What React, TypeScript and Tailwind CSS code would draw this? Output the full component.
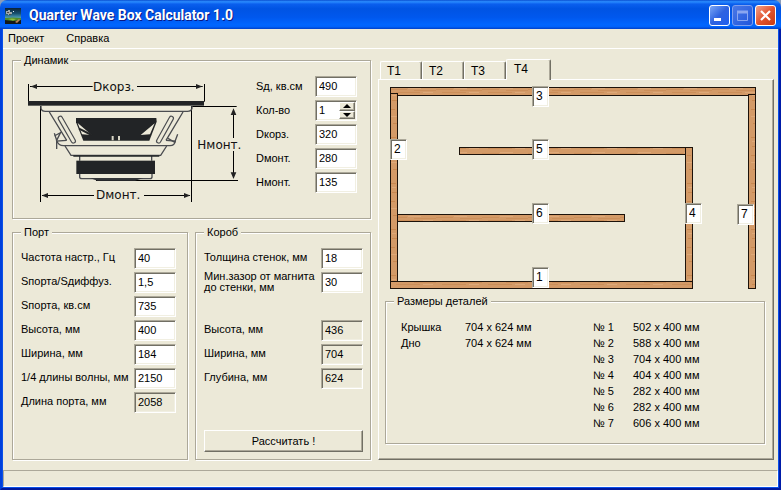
import React, { useState } from 'react';
import { clsx } from 'clsx';

const sunken =
  'border border-t-[#aca899] border-l-[#aca899] border-r-white border-b-white shadow-[inset_1px_1px_0_#716f64,inset_-1px_-1px_0_#f1efe2]';
const raised =
  'border border-t-white border-l-white border-r-[#716f64] border-b-[#716f64] shadow-[inset_-1px_-1px_0_#aca899] bg-[#ece9d8]';

const boards = [
  { x: 0, y: 0, w: 366, h: 9 },
  { x: 358, y: 7, w: 8, h: 195 },
  { x: 0, y: 6, w: 8, h: 190 },
  { x: 69, y: 60, w: 227, h: 8 },
  { x: 295, y: 60, w: 8, h: 142 },
  { x: 7, y: 127, w: 228, h: 8 },
  { x: 0, y: 194, w: 303, h: 8 },
];

const boardMarks = [
  { n: 3, className: 'left-[142px] -top-px' },
  { n: 2, className: 'left-0 top-[52px]' },
  { n: 5, className: 'left-[142px] top-[52px]' },
  { n: 6, className: 'left-[142px] top-[116px]' },
  { n: 1, className: 'left-[142px] top-[180px]' },
  { n: 4, className: 'left-[295px] top-[116px]' },
  { n: 7, className: 'left-[347px] top-[117px]' },
];

const covers = [
  ['Крышка', '704 x 624 мм'],
  ['Дно', '704 x 624 мм'],
];

const parts = [
  ['№ 1', '502 x 400 мм'],
  ['№ 2', '588 x 400 мм'],
  ['№ 3', '704 x 400 мм'],
  ['№ 4', '404 x 400 мм'],
  ['№ 5', '282 x 400 мм'],
  ['№ 6', '282 x 400 мм'],
  ['№ 7', '606 x 400 мм'],
];

function Group({ title, className, children }: { title: string; className?: string; children: React.ReactNode }) {
  return (
    <fieldset
      className={clsx(
        'min-w-0 border border-[#aca899] pl-2 shadow-[1px_1px_0_#fff,inset_1px_1px_0_#fff]',
        className
      )}
    >
      <legend className="h-[13px] bg-[#ece9d8] px-[3px] leading-[13px]">{title}</legend>
      {children}
    </fieldset>
  );
}

function Field({ id, label, value, readOnly }: { id: string; label: React.ReactNode; value: string; readOnly?: boolean }) {
  return (
    <div className="flex h-[21px] items-center justify-between">
      <label htmlFor={id} className="whitespace-nowrap leading-[11px]">{label}</label>
      <input
        id={id}
        type="text"
        defaultValue={value}
        readOnly={readOnly}
        className={clsx('h-[21px] w-[42px] shrink-0 px-[3px] pb-px outline-none', sunken, readOnly ? 'bg-[#ece9d8]' : 'bg-white')}
      />
    </div>
  );
}

function CountField() {
  const [count, setCount] = useState(1);

  return (
    <div className="flex h-[21px] items-center justify-between">
      <label htmlFor="count">Кол-во</label>
      <div className={clsx('flex h-[21px] w-[42px] bg-white p-px', sunken)}>
        <input
          id="count"
          type="text"
          value={count}
          onChange={(e) => setCount(Number(e.target.value) || 1)}
          className="w-0 flex-1 bg-transparent pl-[2px] outline-none"
        />
        <div className="flex w-4 flex-col">
          <button
            type="button"
            aria-label="Больше"
            onClick={() => setCount(count + 1)}
            className={clsx('flex flex-1 items-center justify-center', raised)}
          >
            <svg width="8" height="4" viewBox="0 0 8 4"><path d="M4 0L8 4H0Z" /></svg>
          </button>
          <button
            type="button"
            aria-label="Меньше"
            onClick={() => setCount(Math.max(1, count - 1))}
            className={clsx('flex flex-1 items-center justify-center', raised)}
          >
            <svg width="8" height="4" viewBox="0 0 8 4"><path d="M4 4L8 0H0Z" /></svg>
          </button>
        </div>
      </div>
    </div>
  );
}

function AppIcon() {
  return (
    <svg width="16" height="16" viewBox="0 0 16 16" className="shrink-0">
      <defs>
        <linearGradient id="sky" x1="0" y1="0" x2="0" y2="1">
          <stop offset="0" stopColor="#0c2238" />
          <stop offset="0.5" stopColor="#16506f" />
          <stop offset="1" stopColor="#5fb4cc" />
        </linearGradient>
      </defs>
      <rect width="16" height="16" fill="#14181a" />
      <rect width="16" height="11" fill="url(#sky)" />
      <path d="M1 3H3V2H5V4H7V6H5V7H3V6H1Z" fill="#9fa9ac" />
      <path d="M2 4.500H4M4 6.500H6" stroke="#4f4a48" />
      <path d="M8 3.500H9" stroke="#dfeef5" />
      <path d="M0 10Q8 9 16 10V12L8 13L0 12Z" fill="#4f8a2c" />
      <path d="M3 11Q7 10 11 11L8 12.500Z" fill="#8fbf3f" />
      <path d="M10 14L14 11L15 12L12 15Z" fill="#b9855a" />
    </svg>
  );
}

// Side view of the driver with its dimension arrows
function SpeakerDrawing() {
  return (
    <svg width="216" height="126" viewBox="48 72 648 378" className="ml-[5px] mt-[3px] shrink-0" fill="none">
      <g stroke="#000" strokeWidth="3">
        <path d="M55.500 87V140M583.500 87V140M91.500 153V441M544.500 153V441" />
        <path d="M60 94.500H248M381 94.500H578M96 421.500H252M402 421.500H540" />
        <path d="M546 154.500H680M258 376.500H684M670.500 165V249M670.500 288V368" />
      </g>
      <g fill="#222">
        <path d="M62 94.500L81 87V102ZM577 94.500L558 87V102Z" />
        <path d="M95 421.500L114 414V429ZM541 421.500L522 414V429Z" />
        <path d="M670.500 160L679 180H662ZM670.500 372L679 352H662Z" />
      </g>
      <rect x="54" y="138" width="528" height="14" fill="#222426" />
      <g stroke="#4a4c50" strokeWidth="4">
        <path d="M93 153V160Q95 169 106 169H532Q544 169 546 160V153" />
        <path d="M118 171L170 256M519 171L468 256" />
        <path d="M170 256L140 258Q146 272 160 272H480Q494 272 496 258L468 256" />
        <path d="M155 231L133 243M133 235L140 256V282M152 232L140 256M503 238L494 262L474 250" />
        <path d="M165 273L183 301H452L470 273" />
        <path d="M209 301V317M425 301V317M209 357V366Q209 371 216 371H420Q426 371 426 366V357" />
      </g>
      {/* basket slots */}
      <g strokeLinecap="round">
        <path d="M151 190L190 258M484 190L446 258" stroke="#4a4c50" strokeWidth="16" />
        <path d="M151 190L190 258M484 190L446 258" stroke="#ece9d8" strokeWidth="9" />
      </g>
      <path d="M198 189H439L440 200L418 257H220L198 202Z" fill="#222426" />
      <path d="M203 204L245 240L216 238ZM434 205L392 240L420 238Z" fill="#ece9d8" />
      <path d="M207 221L245 240" stroke="#222426" strokeWidth="6" />
      <path d="M305 243H311V256H305ZM324 243H330V256H324Z" fill="#d9d6c6" />
      <path d="M190 303H448" stroke="#222426" strokeWidth="5" />
      <rect x="199" y="317" width="236" height="40" fill="#222426" />
      <path d="M240 369H400L375 377H262Z" fill="#333538" />
      <g fill="#111" fontSize="36" fontFamily="'DejaVu Sans', sans-serif">
        <text x="249" y="108">Dкорз.</text>
        <text x="258" y="432">Dмонт.</text>
        <text x="562" y="282">Hмонт.</text>
      </g>
    </svg>
  );
}

function BoxDrawing() {
  return (
    <div className="relative ml-[11px] mt-[7px] h-[202px] w-[366px]">
      <svg width="366" height="202" viewBox="0 0 366 202">
        <defs>
          <pattern id="grainH" width="46" height="8" patternUnits="userSpaceOnUse">
            <rect width="46" height="8" fill="#d39a67" />
            <path d="M0 2.500H17M24 3.500H46M6 5.500H30" stroke="#cc8f5a" />
            <path d="M18 1.500H31M33 5.500H43" stroke="#dda878" />
          </pattern>
          <pattern id="grainV" width="8" height="46" patternUnits="userSpaceOnUse">
            <rect width="8" height="46" fill="#d39a67" />
            <path d="M1 4.500H6M2 13.500H7M1 22.500H5M3 36.500H7" stroke="#c88850" />
            <path d="M2 8.500H6M1 29.500H7" stroke="#dda878" />
          </pattern>
        </defs>
        {boards.map((b, i) => (
          <rect
            key={i}
            x={b.x + 0.5}
            y={b.y + 0.5}
            width={b.w - 1}
            height={b.h - 1}
            fill={b.w > b.h ? 'url(#grainH)' : 'url(#grainV)'}
            stroke="#1c120a"
          />
        ))}
      </svg>
      {boardMarks.map((m) => (
        <input
          key={m.n}
          type="text"
          readOnly
          aria-label={`Деталь ${m.n}`}
          value={m.n}
          className={clsx('absolute h-[21px] w-[17px] bg-white px-[3px] pb-px text-xs outline-none', sunken, m.className)}
        />
      ))}
    </div>
  );
}

function SizeTable({ rows, nameWidth }: { rows: string[][]; nameWidth: string }) {
  return (
    <table className="self-start">
      <tbody>
        {rows.map(([name, size]) => (
          <tr key={name} className="h-4">
            <th scope="row" className={clsx('p-0 text-left font-normal', nameWidth)}>{name}</th>
            <td className="whitespace-nowrap p-0">{size}</td>
          </tr>
        ))}
      </tbody>
    </table>
  );
}

function TitleBar() {
  const button = 'flex h-[21px] w-[21px] items-center justify-center rounded-[3px] border';

  return (
    <header className="flex h-[29px] items-center gap-2 rounded-t-[7px] bg-[linear-gradient(180deg,#0a4fd0_0%,#2a8cff_6%,#0a5fee_14%,#0054e3_30%,#0058ee_60%,#0066ff_85%,#0062fa_92%,#0040c8_100%)] pl-[5px] pr-[5px] pt-[2px]">
      <AppIcon />
      <h1 className="flex-1 font-['Roboto',sans-serif] text-[14px] font-bold text-white [text-shadow:1px_1px_0_#0a1883]">
        Quarter Wave Box Calculator 1.0
      </h1>
      <div className="flex gap-[2px]">
        <button type="button" aria-label="Свернуть" className={clsx(button, 'border-white bg-linear-to-br from-[#7aa5f5] via-[#2e62e0] to-[#1f5ff0]')}>
          <svg width="15" height="15" viewBox="0 0 15 15"><path d="M2 10H9V13H2Z" fill="#fff" /></svg>
        </button>
        <button type="button" aria-label="Развернуть" disabled className={clsx(button, 'border-[#7f9fee] bg-linear-to-br from-[#4a78e6] to-[#1f55dc]')}>
          <svg width="15" height="15" viewBox="0 0 15 15" fill="none" stroke="#8aa6f0">
            <path d="M2.500 3.500H12.500V12.500H2.500Z" />
            <path d="M2 4H13" strokeWidth="3" />
          </svg>
        </button>
        <button type="button" aria-label="Закрыть" className={clsx(button, 'border-white bg-linear-to-br from-[#f0a088] via-[#e2542e] to-[#c93a10]')}>
          <svg width="15" height="15" viewBox="0 0 15 15"><path d="M3 3L12 12M12 3L3 12" stroke="#fff" strokeWidth="2.200" /></svg>
        </button>
      </div>
    </header>
  );
}

export default function App() {
  const [tab, setTab] = useState('T4');

  return (
    <div className="flex min-h-screen flex-col bg-[#8b9cb8] font-['Liberation_Sans',Arial,sans-serif] text-[11px] leading-[13px] text-black">
      <TitleBar />
      <div className="flex flex-1 flex-col border-x-2 border-b-2 border-b-[#00189c] border-l-[#0040dc] border-r-[#001ca8] bg-[#0a50e8] px-px pb-px">
        <div className="flex flex-1 flex-col bg-[#ece9d8]">
          <nav className="flex h-5 items-center gap-[22px] border-b border-white px-[5px]">
            <button type="button">Проект</button>
            <button type="button">Справка</button>
          </nav>

          <main className="flex flex-1 gap-[7px] pb-[10px] pl-[9px] pr-1 pt-[5px]">
            <div className="flex w-[359px] shrink-0 flex-col gap-[7px]">
              <Group title="Динамик" className="h-[165px]">
                <div className="flex gap-[14px] pr-[13px] pt-[9px]">
                  <SpeakerDrawing />
                  <div className="flex flex-1 flex-col gap-[3px]">
                    <Field id="sd" label="Sд, кв.см" value="490" />
                    <CountField />
                    <Field id="d-basket" label="Dкорз." value="320" />
                    <Field id="d-mount" label="Dмонт." value="280" />
                    <Field id="h-mount" label="Hмонт." value="135" />
                  </div>
                </div>
              </Group>

              <div className="grid flex-1 grid-cols-2 gap-[7px] [&_label]:pb-[2px]">
                <Group title="Порт" className="pr-[11px]">
                  <div className="flex flex-col gap-[3px] pt-[9px]">
                    <Field id="freq" label="Частота настр., Гц" value="40" />
                    <Field id="ratio" label="Sпорта/Sдиффуз." value="1,5" />
                    <Field id="port-area" label="Sпорта, кв.см" value="735" />
                    <Field id="port-height" label="Высота, мм" value="400" />
                    <Field id="port-width" label="Ширина, мм" value="184" />
                    <Field id="quarter" label="1/4 длины волны, мм" value="2150" />
                    <Field id="port-length" label="Длина порта, мм" value="2058" readOnly />
                  </div>
                </Group>

                <Group title="Короб" className="flex flex-col pb-[7px] pr-[7px]">
                  <div className="flex flex-1 flex-col gap-[3px] pt-[9px]">
                    <Field id="wall" label="Толщина стенок, мм" value="18" />
                    <Field id="magnet-gap" label={<>Мин.зазор от магнита<br />до стенки, мм</>} value="30" />
                    <div className="mt-6 flex flex-col gap-[3px]">
                      <Field id="box-height" label="Высота, мм" value="436" readOnly />
                      <Field id="box-width" label="Ширина, мм" value="704" readOnly />
                      <Field id="box-depth" label="Глубина, мм" value="624" readOnly />
                    </div>
                    <button type="button" className={clsx('mt-auto h-[22px] w-full', raised)}>
                      Рассчитать !
                    </button>
                  </div>
                </Group>
              </div>
            </div>

            <div className="flex min-w-0 flex-1 flex-col pt-[5px]">
              <div role="tablist" className="flex h-5 items-end pl-[2px]">
                {['T1', 'T2', 'T3', 'T4'].map((name) => (
                  <button
                    key={name}
                    type="button"
                    role="tab"
                    aria-selected={tab === name}
                    onClick={() => setTab(name)}
                    className={clsx(
                      'rounded-t-[2px] border-l border-t border-white bg-[#ece9d8] text-left text-xs',
                      tab === name
                        ? 'z-10 -mb-px h-[21px] w-[45px] border-r border-r-[#716f64] pb-[2px] pl-[7px] shadow-[inset_-1px_0_0_#aca899]'
                        : 'h-[18px] w-[42px] border-r border-r-[#716f64] pl-[6px] shadow-[inset_-1px_0_0_#aca899]'
                    )}
                  >
                    {name}
                  </button>
                ))}
              </div>
              <div role="tabpanel" className={clsx('flex flex-1 flex-col', raised)}>
                <BoxDrawing />
                <Group title="Размеры деталей" className="mb-[15px] ml-[6px] mr-2 mt-[6px] flex-1">
                  <div className="flex pl-[7px] pt-[11px]">
                    <div className="w-48">
                      <SizeTable rows={covers} nameWidth="w-16" />
                    </div>
                    <SizeTable rows={parts} nameWidth="w-10" />
                  </div>
                </Group>
              </div>
            </div>
          </main>

          <footer className="h-[17px] border border-b-white border-l-[#aca899] border-r-white border-t-[#aca899]" />
        </div>
      </div>
    </div>
  );
}
